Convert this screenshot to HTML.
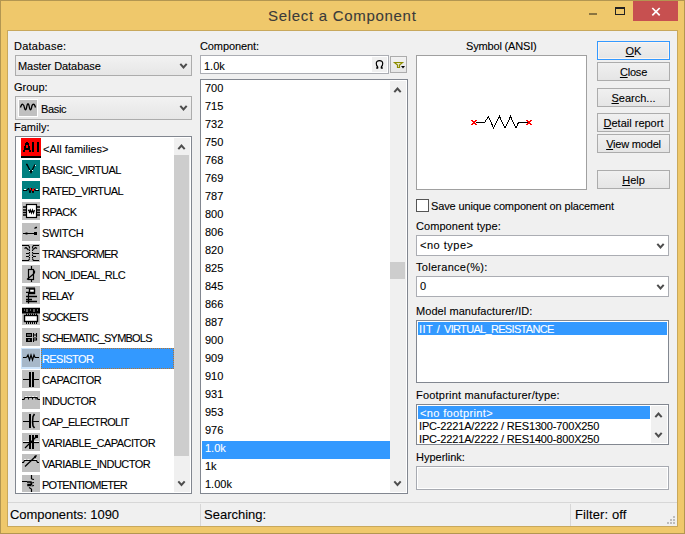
<!DOCTYPE html><html><head><meta charset="utf-8"><style>html,body{margin:0;padding:0;width:685px;height:534px;overflow:hidden;background:#efc86b;}.t{position:absolute;font-family:'Liberation Sans', sans-serif;white-space:pre;-webkit-text-stroke:0.1px currentColor;}</style></head><body><div style="position:absolute;left:0px;top:0px;width:685px;height:534px;box-sizing:border-box;border:1px solid #b39651;background:#efc86b;"></div><div style="position:absolute;left:7px;top:30px;width:669px;height:495px;border:1px solid #c8a85c;background:#f0f0f0;"></div><div class="t" style="left:268px;top:7px;font-size:15px;line-height:17px;letter-spacing:0.7px;color:#3a3a3a;">Select a Component</div><div style="position:absolute;left:589px;top:13px;width:8px;height:2px;background:#8a7440;"></div><div style="position:absolute;left:615px;top:7px;width:10px;height:8px;box-sizing:border-box;border:1px solid #222;border-top-width:2px;"></div><div style="position:absolute;left:633px;top:1px;width:45px;height:20px;background:#c75050;"></div><svg style="position:absolute;left:633px;top:1px" width="45" height="20"><path d="M19.3,7 L26.7,14.4 M26.7,7 L19.3,14.4" stroke="#fff" stroke-width="1.7"/></svg><div class="t" style="left:14px;top:40px;font-size:11px;line-height:13px;letter-spacing:0.25px;color:#000;">Database:</div><div style="position:absolute;left:15px;top:55px;width:175px;height:19px;border:1px solid #acacac;background:linear-gradient(#f2f2f2,#e6e6e6);"></div><div class="t" style="left:18px;top:60px;font-size:11px;line-height:13px;letter-spacing:-0.07px;color:#000;">Master Database</div><svg style="position:absolute;left:0;top:0" width="685" height="534"><path d="M180.3,63.8 L183.5,67.4 L186.7,63.8" fill="none" stroke="#4d4d4d" stroke-width="2"/></svg><div class="t" style="left:14px;top:81px;font-size:11px;line-height:13px;color:#000;">Group:</div><div style="position:absolute;left:15px;top:96px;width:175px;height:22px;border:1px solid #acacac;background:linear-gradient(#f2f2f2,#e6e6e6);"></div><div style="position:absolute;left:18px;top:99px;width:20px;height:18px;background:#fff;"></div><div style="position:absolute;left:19px;top:100px;width:18px;height:16px;background:#c0c0c0;"></div><div class="t" style="left:41px;top:103px;font-size:11px;line-height:13px;letter-spacing:-0.35px;color:#000;">Basic</div><svg style="position:absolute;left:0;top:0" width="685" height="534"><path d="M180.3,105.8 L183.5,109.4 L186.7,105.8" fill="none" stroke="#4d4d4d" stroke-width="2"/></svg><div class="t" style="left:14px;top:121px;font-size:11px;line-height:13px;color:#000;">Family:</div><div style="position:absolute;left:15px;top:136px;width:175px;height:356px;border:1px solid #828790;background:#fff;"></div><div style="position:absolute;left:174px;top:138px;width:16px;height:354px;background:#f0f0f0;"></div><div style="position:absolute;left:174px;top:155px;width:15px;height:301px;background:#cdcdcd;"></div><svg style="position:absolute;left:0;top:0" width="685" height="534"><path d="M178.3,149.2 L181.5,145.6 L184.7,149.2" fill="none" stroke="#4d4d4d" stroke-width="2"/></svg><svg style="position:absolute;left:0;top:0" width="685" height="534"><path d="M178.3,481.3 L181.5,484.9 L184.7,481.3" fill="none" stroke="#4d4d4d" stroke-width="2"/></svg><div class="t" style="left:200px;top:40px;font-size:11px;line-height:13px;letter-spacing:-0.1px;color:#000;">Component:</div><div style="position:absolute;left:200px;top:55px;width:187px;height:17px;border:1px solid #abadb3;background:#fff;"></div><div class="t" style="left:204px;top:60px;font-size:11px;line-height:13px;color:#000;">1.0k</div><div style="position:absolute;left:372px;top:57px;width:15px;height:15px;background:#f0f0f0;"></div><svg style="position:absolute;left:372px;top:57px" width="15" height="15"><path d="M5.6,11 V9.8 Q4.3,8.6 4.3,6.6 Q4.3,3.7 7.5,3.7 Q10.7,3.7 10.7,6.6 Q10.7,8.6 9.4,9.8 V11" fill="none" stroke="#000" stroke-width="1.2"/><path d="M4.2,11 H6.2 M8.8,11 H10.8" stroke="#000" stroke-width="1.4"/></svg><div style="position:absolute;left:390px;top:56px;width:15px;height:15px;border:1px solid #acacac;background:linear-gradient(#f2f2f2,#e6e6e6);"></div><div style="position:absolute;left:200px;top:79px;width:206px;height:413px;border:1px solid #828790;background:#fff;"></div><div style="position:absolute;left:390px;top:81px;width:16px;height:411px;background:#f0f0f0;"></div><div style="position:absolute;left:390px;top:262px;width:15px;height:17px;background:#cdcdcd;"></div><svg style="position:absolute;left:0;top:0" width="685" height="534"><path d="M394.3,92.2 L397.5,88.6 L400.7,92.2" fill="none" stroke="#4d4d4d" stroke-width="2"/></svg><svg style="position:absolute;left:0;top:0" width="685" height="534"><path d="M394.3,481.3 L397.5,484.9 L400.7,481.3" fill="none" stroke="#4d4d4d" stroke-width="2"/></svg><div style="position:absolute;left:202px;top:81px;width:188px;height:411px;overflow:hidden"><div class="t" style="left:3px;top:1px;font-size:11px;line-height:13px;color:#000">700</div><div class="t" style="left:3px;top:19px;font-size:11px;line-height:13px;color:#000">715</div><div class="t" style="left:3px;top:37px;font-size:11px;line-height:13px;color:#000">732</div><div class="t" style="left:3px;top:55px;font-size:11px;line-height:13px;color:#000">750</div><div class="t" style="left:3px;top:73px;font-size:11px;line-height:13px;color:#000">768</div><div class="t" style="left:3px;top:91px;font-size:11px;line-height:13px;color:#000">769</div><div class="t" style="left:3px;top:109px;font-size:11px;line-height:13px;color:#000">787</div><div class="t" style="left:3px;top:127px;font-size:11px;line-height:13px;color:#000">800</div><div class="t" style="left:3px;top:145px;font-size:11px;line-height:13px;color:#000">806</div><div class="t" style="left:3px;top:163px;font-size:11px;line-height:13px;color:#000">820</div><div class="t" style="left:3px;top:181px;font-size:11px;line-height:13px;color:#000">825</div><div class="t" style="left:3px;top:199px;font-size:11px;line-height:13px;color:#000">845</div><div class="t" style="left:3px;top:217px;font-size:11px;line-height:13px;color:#000">866</div><div class="t" style="left:3px;top:235px;font-size:11px;line-height:13px;color:#000">887</div><div class="t" style="left:3px;top:253px;font-size:11px;line-height:13px;color:#000">900</div><div class="t" style="left:3px;top:271px;font-size:11px;line-height:13px;color:#000">909</div><div class="t" style="left:3px;top:289px;font-size:11px;line-height:13px;color:#000">910</div><div class="t" style="left:3px;top:307px;font-size:11px;line-height:13px;color:#000">931</div><div class="t" style="left:3px;top:325px;font-size:11px;line-height:13px;color:#000">953</div><div class="t" style="left:3px;top:343px;font-size:11px;line-height:13px;color:#000">976</div><div style="position:absolute;left:0;top:360px;width:188px;height:18px;background:#3399ff"></div><div class="t" style="left:3px;top:361px;font-size:11px;line-height:13px;color:#fff">1.0k</div><div class="t" style="left:3px;top:379px;font-size:11px;line-height:13px;color:#000">1k</div><div class="t" style="left:3px;top:397px;font-size:11px;line-height:13px;color:#000">1.00k</div></div><div class="t" style="left:466px;top:40px;font-size:11px;line-height:13px;letter-spacing:-0.17px;color:#000;">Symbol (ANSI)</div><div style="position:absolute;left:416px;top:55px;width:169px;height:133px;border:1px solid #a0a0a0;background:#fff;"></div><div style="position:absolute;left:597px;top:41px;width:71px;height:17px;border:1px solid #3399ff;background:linear-gradient(#f0f0f0,#e5e5e5);box-shadow:inset 0 0 0 1px #fdf5ef;"></div><div class="t" style="left:597px;top:45px;width:73px;text-align:center;font-size:11px;line-height:13px;letter-spacing:0px;color:#000"><u>O</u>K</div><div style="position:absolute;left:597px;top:62px;width:71px;height:17px;border:1px solid #acacac;background:linear-gradient(#f0f0f0,#e5e5e5);"></div><div class="t" style="left:597px;top:66px;width:73px;text-align:center;font-size:11px;line-height:13px;letter-spacing:-0.2px;color:#000"><u>C</u>lose</div><div style="position:absolute;left:597px;top:88px;width:71px;height:17px;border:1px solid #acacac;background:linear-gradient(#f0f0f0,#e5e5e5);"></div><div class="t" style="left:597px;top:92px;width:73px;text-align:center;font-size:11px;line-height:13px;letter-spacing:0px;color:#000"><u>S</u>earch...</div><div style="position:absolute;left:597px;top:113px;width:71px;height:17px;border:1px solid #acacac;background:linear-gradient(#f0f0f0,#e5e5e5);"></div><div class="t" style="left:597px;top:117px;width:73px;text-align:center;font-size:11px;line-height:13px;letter-spacing:0px;color:#000"><u>D</u>etail report</div><div style="position:absolute;left:597px;top:134px;width:71px;height:17px;border:1px solid #acacac;background:linear-gradient(#f0f0f0,#e5e5e5);"></div><div class="t" style="left:597px;top:138px;width:73px;text-align:center;font-size:11px;line-height:13px;letter-spacing:-0.2px;color:#000"><u>V</u>iew model</div><div style="position:absolute;left:597px;top:170px;width:71px;height:17px;border:1px solid #acacac;background:linear-gradient(#f0f0f0,#e5e5e5);"></div><div class="t" style="left:597px;top:174px;width:73px;text-align:center;font-size:11px;line-height:13px;letter-spacing:0px;color:#000"><u>H</u>elp</div><div style="position:absolute;left:416px;top:199px;width:11px;height:11px;border:1px solid #555;background:#fff;"></div><div class="t" style="left:431px;top:200px;font-size:11px;line-height:13px;letter-spacing:-0.14px;color:#000;">Save unique component on placement</div><div class="t" style="left:416px;top:220px;font-size:11px;line-height:13px;letter-spacing:0.07px;color:#000;">Component type:</div><div style="position:absolute;left:416px;top:235px;width:251px;height:19px;border:1px solid #abadb3;background:#fff;"></div><div class="t" style="left:420px;top:239px;font-size:11px;line-height:13px;letter-spacing:0.5px;color:#000;">&lt;no type&gt;</div><svg style="position:absolute;left:0;top:0" width="685" height="534"><path d="M657.3,243.8 L660.5,247.4 L663.7,243.8" fill="none" stroke="#4d4d4d" stroke-width="2"/></svg><div class="t" style="left:416px;top:261px;font-size:11px;line-height:13px;letter-spacing:0.28px;color:#000;">Tolerance(%):</div><div style="position:absolute;left:416px;top:276px;width:251px;height:19px;border:1px solid #abadb3;background:#fff;"></div><div class="t" style="left:420px;top:280px;font-size:11px;line-height:13px;color:#000;">0</div><svg style="position:absolute;left:0;top:0" width="685" height="534"><path d="M657.3,284.8 L660.5,288.4 L663.7,284.8" fill="none" stroke="#4d4d4d" stroke-width="2"/></svg><div class="t" style="left:416px;top:305px;font-size:11px;line-height:13px;letter-spacing:0.07px;color:#000;">Model manufacturer/ID:</div><div style="position:absolute;left:416px;top:320px;width:251px;height:61px;border:1px solid #828790;background:#fff;"></div><div style="position:absolute;left:418px;top:322px;width:249px;height:13px;background:#3399ff;"></div><div class="t" style="left:419px;top:323px;font-size:11px;line-height:13px;letter-spacing:0.5px;color:#fff;">IIT / </div><div class="t" style="left:444px;top:323px;font-size:11px;line-height:13px;letter-spacing:-0.68px;color:#fff;">VIRTUAL_RESISTANCE</div><div class="t" style="left:416px;top:389px;font-size:11px;line-height:13px;letter-spacing:0.2px;color:#000;">Footprint manufacturer/type:</div><div style="position:absolute;left:416px;top:404px;width:251px;height:39px;border:1px solid #828790;background:#fff;"></div><div style="position:absolute;left:418px;top:406px;width:233px;height:37px;overflow:hidden"><div style="position:absolute;left:0;top:0;width:232px;height:13px;background:#3399ff"></div><div class="t" style="left:2px;top:1px;font-size:11px;line-height:13px;color:#fff;letter-spacing:0.36px">&lt;no footprint&gt;</div><div class="t" style="left:1px;top:14px;font-size:11px;line-height:13px;color:#000;letter-spacing:-0.16px">IPC-2221A/2222 / RES1300-700X250</div><div class="t" style="left:1px;top:27px;font-size:11px;line-height:13px;color:#000;letter-spacing:-0.16px">IPC-2221A/2222 / RES1400-800X250</div></div><div style="position:absolute;left:651px;top:406px;width:16px;height:37px;background:#f0f0f0;"></div><svg style="position:absolute;left:0;top:0" width="685" height="534"><path d="M655.3,417.2 L658.5,413.6 L661.7,417.2" fill="none" stroke="#4d4d4d" stroke-width="2"/></svg><svg style="position:absolute;left:0;top:0" width="685" height="534"><path d="M655.3,432.8 L658.5,436.4 L661.7,432.8" fill="none" stroke="#4d4d4d" stroke-width="2"/></svg><div class="t" style="left:416px;top:451px;font-size:11px;line-height:13px;color:#000;">Hyperlink:</div><div style="position:absolute;left:416px;top:466px;width:251px;height:22px;border:1px solid #a7aab1;background:#f0f0f0;box-shadow:inset 0 0 0 1px #fff;"></div><div style="position:absolute;left:8px;top:502px;width:669px;height:1px;background:#d7d7d7;"></div><div style="position:absolute;left:200px;top:504px;width:1px;height:22px;background:#d7d7d7;"></div><div style="position:absolute;left:570px;top:504px;width:1px;height:22px;background:#d7d7d7;"></div><div class="t" style="left:10px;top:507px;font-size:13px;line-height:15px;letter-spacing:-0.05px;color:#000;">Components: 1090</div><div class="t" style="left:204px;top:507px;font-size:13px;line-height:15px;color:#000;">Searching:</div><div class="t" style="left:575px;top:507px;font-size:13px;line-height:15px;letter-spacing:0.1px;color:#000;">Filter: off</div><div style="position:absolute;left:17px;top:138px;width:157px;height:354px;overflow:hidden"><div style="position:absolute;left:4px;top:0px;width:20px;height:18px;background:#f00"></div><div style="position:absolute;left:4px;top:18px;width:20px;height:2px;background:#000"></div><svg style="position:absolute;left:4px;top:0px" width="20" height="18"><path d="M5,4h2v1h-2z M4,5h4v3h-4z M3,8h2v2h-2z M7,8h2v2h-2z M3,10h6v2h-6z M2,12h2v2h-2z M8,12h2v2h-2z M11,4h2v10h-2z M16,4h2v10h-2z" fill="#000"/><rect x="5" y="7" width="2" height="2" fill="#f00"/></svg><div class="t" style="left:26px;top:5px;font-size:11px;line-height:13px;letter-spacing:0px;color:#000">&lt;All families&gt;</div><svg style="position:absolute;left:5px;top:22px;overflow:visible" width="18" height="18"><rect width="18" height="18" fill="#008080"/><path d="M4,4.5 H5 L9,12.5 L13,4.5" fill="none" stroke="#000" stroke-width="1.3"/><rect x="7" y="10" width="1" height="1" fill="#fff"/><rect x="10" y="10" width="1" height="1" fill="#fff"/><rect x="13" y="5" width="1" height="1" fill="#fff"/></svg><div class="t" style="left:25px;top:26px;font-size:11px;line-height:13px;letter-spacing:-0.5px;color:#000">BASIC_VIRTUAL</div><svg style="position:absolute;left:5px;top:43px;overflow:visible" width="18" height="18"><rect width="18" height="18" fill="#008080"/><path d="M1,9.5 H5 M13,9.5 H17" stroke="#000" stroke-width="1"/><path d="M2,8.5 H4 M14,8.5 H16" stroke="#fff" stroke-width="1"/><path d="M5,9.5 L6.5,7 L8,12 L9.5,7 L11,12 L12.5,7 L13,9.5" fill="none" stroke="#000" stroke-width="1"/><rect x="8" y="7" width="1" height="2" fill="#f00"/><rect x="10" y="8" width="2" height="2" fill="#f00"/><rect x="12" y="7" width="1" height="1" fill="#f00"/></svg><div class="t" style="left:25px;top:47px;font-size:11px;line-height:13px;letter-spacing:-0.6px;color:#000">RATED_VIRTUAL</div><svg style="position:absolute;left:5px;top:64px;overflow:visible" width="18" height="18"><rect width="18" height="18" fill="#c0c0c0"/><rect x="4.5" y="2.5" width="10" height="13" fill="#fff" stroke="#000" stroke-width="1.2"/><path d="M1,5 H4 M1,8 H4 M1,10.5 H4 M1,13 H4 M15,5 H18 M15,8 H18 M15,10.5 H18 M15,13 H18" stroke="#000" stroke-width="1.3"/><path d="M6,8.5 L7,8 L7.5,11 L8.5,8 L9.5,11 L10.5,8 L11.5,11 L12.5,8" fill="none" stroke="#000" stroke-width="1.1"/></svg><div class="t" style="left:25px;top:68px;font-size:11px;line-height:13px;letter-spacing:-0.5px;color:#000">RPACK</div><svg style="position:absolute;left:5px;top:85px;overflow:visible" width="18" height="18"><rect width="18" height="18" fill="#c0c0c0"/><path d="M1,10.5 H15" stroke="#000" stroke-width="1"/><rect x="3.5" y="9.5" width="2" height="2" fill="#000"/><rect x="12" y="9" width="3" height="3" fill="#000"/><path d="M12.5,5.5 L14,4.5 H15" stroke="#000" stroke-width="1.3" fill="none"/></svg><div class="t" style="left:25px;top:89px;font-size:11px;line-height:13px;letter-spacing:-0.34px;color:#000">SWITCH</div><svg style="position:absolute;left:5px;top:106px;overflow:visible" width="18" height="18"><rect width="18" height="18" fill="#c0c0c0"/><path d="M0,1.5 H6.5 L7.5,3 M17,1.5 H11.5 L10.5,3 M0,16.5 H6.5 L7.5,15 M17,16.5 H11.5 L10.5,15" stroke="#000" stroke-width="1.2" fill="none"/><path d="M7.5,3 V15 M10.5,3 V15" stroke="#000" stroke-width="1.2" stroke-dasharray="1.5,1"/><path d="M2.5,4.5 L4,3.5 L6.5,6 M4,9.5 H7 M4,12.5 H7 M11,5.5 L13.5,3.5 L15,4.5 M11,9.5 H17 M11,12.5 H14" stroke="#000" stroke-width="1.2" fill="none"/><path d="M9,0 V18" stroke="#c8c8c8" stroke-width="1.6"/></svg><div class="t" style="left:25px;top:110px;font-size:11px;line-height:13px;letter-spacing:-0.85px;color:#000">TRANSFORMER</div><svg style="position:absolute;left:5px;top:127px;overflow:visible" width="18" height="18"><rect width="18" height="18" fill="#c0c0c0"/><path d="M9.5,1 V4 M9.5,15 V17" stroke="#000" stroke-width="1.2"/><rect x="6.5" y="4.5" width="5" height="10" fill="none" stroke="#000" stroke-width="1.2"/><path d="M5,14.5 L11.5,9 L12.5,7.5 V5.5" fill="none" stroke="#000" stroke-width="1.2"/></svg><div class="t" style="left:25px;top:131px;font-size:11px;line-height:13px;letter-spacing:-0.56px;color:#000">NON_IDEAL_RLC</div><svg style="position:absolute;left:5px;top:148px;overflow:visible" width="18" height="18"><rect width="18" height="18" fill="#c0c0c0"/><rect x="7.5" y="3" width="5" height="4.5" fill="#fff" stroke="#000" stroke-width="1.4"/><path d="M4,2.2 H13 M4,6.3 H13 M4,10.5 H15 M4,13.5 H10 M4,15.5 H15" stroke="#000" stroke-width="1.3"/><path d="M6.5,7 V17.5" stroke="#000" stroke-width="1.2"/></svg><div class="t" style="left:25px;top:152px;font-size:11px;line-height:13px;letter-spacing:-0.7px;color:#000">RELAY</div><svg style="position:absolute;left:5px;top:169px;overflow:visible" width="18" height="18"><rect width="18" height="18" fill="#c0c0c0"/><path d="M0,1 H18 V6.5 H0 Z" fill="#000"/><path d="M2,3 H3 M5,2 V5 M8,3 H9 M12,2 V5 M15,3 H16" stroke="#c0c0c0" stroke-width="1"/><path d="M4.5,6.5 V8 M6.5,6.5 V8 M8.5,6.5 V8 M10.5,6.5 V8 M12.5,6.5 V8 M14.5,6.5 V8" stroke="#000" stroke-width="1"/><rect x="2.5" y="8.5" width="13" height="6" fill="#fff" stroke="#000" stroke-width="1.4"/><path d="M4.5,15 V17 M6.5,15 V17 M8.5,15 V17 M10.5,15 V17 M12.5,15 V17 M14.5,15 V17" stroke="#000" stroke-width="1"/></svg><div class="t" style="left:25px;top:173px;font-size:11px;line-height:13px;letter-spacing:-1.0px;color:#000">SOCKETS</div><svg style="position:absolute;left:5px;top:190px;overflow:visible" width="18" height="18"><rect width="18" height="18" fill="#c0c0c0"/><path d="M4,5 H10 V9 H4 Z M4,10 H10 V14 H4 Z" fill="#000"/><path d="M5,7 H9 M6,12 H8" stroke="#c0c0c0" stroke-width="1"/><path d="M11.5,5 V9 M14.5,5 V9 M11.5,7 H14.5 M11.5,14 V10 H14.5 V12 H11.5" stroke="#000" stroke-width="1.1" fill="none"/></svg><div class="t" style="left:25px;top:194px;font-size:11px;line-height:13px;letter-spacing:-0.8px;color:#000">SCHEMATIC_SYMBOLS</div><svg style="position:absolute;left:5px;top:211px;overflow:visible" width="18" height="18"><rect x="-1" y="-1" width="20" height="21" fill="#cde4fb"/><rect width="18" height="18" fill="#a7b8c9"/><path d="M1,8.5 H4.5 M13,8.5 H17" stroke="#000" stroke-width="1.2"/><path d="M4.5,8.5 L6,6 L7.5,11 L9,6 L10.5,11 L12,6 L13,8.5" fill="none" stroke="#000" stroke-width="1.2"/></svg><div style="position:absolute;left:24px;top:210px;width:133px;height:21px;background:#3399ff;box-sizing:border-box;border:1px dotted #b8742e"></div><div class="t" style="left:25px;top:215px;font-size:11px;line-height:13px;letter-spacing:-0.58px;color:#fff">RESISTOR</div><svg style="position:absolute;left:5px;top:232px;overflow:visible" width="18" height="18"><rect width="18" height="18" fill="#c0c0c0"/><path d="M1,9.5 H7 M11,9.5 H17" stroke="#000" stroke-width="1.2"/><rect x="7" y="2" width="2" height="15" fill="#000"/><rect x="10" y="2" width="2" height="15" fill="#000"/></svg><div class="t" style="left:25px;top:236px;font-size:11px;line-height:13px;letter-spacing:-0.43px;color:#000">CAPACITOR</div><svg style="position:absolute;left:5px;top:253px;overflow:visible" width="18" height="18"><rect width="18" height="18" fill="#c0c0c0"/><path d="M0,8.5 H2 L3,6.5 H15 L16,8.5 H18" fill="none" stroke="#000" stroke-width="1.2"/><path d="M6.5,6.5 V8.5 M10.5,6.5 V8.5 M14,6.5 V8.5" stroke="#000" stroke-width="1.1"/><path d="M3,5.5 H15" stroke="#fff" stroke-width="0.8" stroke-dasharray="2,1.5"/></svg><div class="t" style="left:25px;top:257px;font-size:11px;line-height:13px;letter-spacing:-0.47px;color:#000">INDUCTOR</div><svg style="position:absolute;left:5px;top:274px;overflow:visible" width="18" height="18"><rect width="18" height="18" fill="#c0c0c0"/><path d="M1,9.5 H7 M11,9.5 H17" stroke="#000" stroke-width="1.2"/><rect x="7" y="2" width="2" height="14" fill="#000"/><path d="M12.5,2 L11,4.5 Q10.2,9.5 11,14 L12.5,16" fill="none" stroke="#000" stroke-width="1.5"/></svg><div class="t" style="left:25px;top:278px;font-size:11px;line-height:13px;letter-spacing:-0.7px;color:#000">CAP_ELECTROLIT</div><svg style="position:absolute;left:5px;top:295px;overflow:visible" width="18" height="18"><rect width="18" height="18" fill="#c0c0c0"/><path d="M1,9.5 H17" stroke="#000" stroke-width="1.2"/><path d="M1,8.5 H7 M11,8.5 H17" stroke="#fff" stroke-width="0.8"/><rect x="7" y="2" width="2" height="14" fill="#000"/><rect x="10" y="2" width="2" height="14" fill="#000"/><path d="M3,15 L14,4" stroke="#000" stroke-width="1.2"/><rect x="13" y="2" width="3" height="3" fill="#000"/></svg><div class="t" style="left:25px;top:299px;font-size:11px;line-height:13px;letter-spacing:-0.51px;color:#000">VARIABLE_CAPACITOR</div><svg style="position:absolute;left:5px;top:316px;overflow:visible" width="18" height="18"><rect width="18" height="18" fill="#c0c0c0"/><path d="M0,8.5 H1.5 L2.5,6.5 H14.5 L15.5,8.5 H17" fill="none" stroke="#000" stroke-width="1.2"/><path d="M2,5.5 H15" stroke="#fff" stroke-width="0.8" stroke-dasharray="2,1.5"/><path d="M3,12.5 L14,2" stroke="#000" stroke-width="1.3"/><path d="M12,2 L15,1 L13.5,4.5 Z" fill="#000"/></svg><div class="t" style="left:25px;top:320px;font-size:11px;line-height:13px;letter-spacing:-0.51px;color:#000">VARIABLE_INDUCTOR</div><svg style="position:absolute;left:5px;top:337px;overflow:visible" width="18" height="18"><rect width="18" height="18" fill="#c0c0c0"/><path d="M9.5,0 V4 M9.5,14 V18 M0,6.5 H5" stroke="#000" stroke-width="1.2"/><path d="M9.5,4 L12,4.5 M12,7.5 L9.5,8 M9.5,11 L12,10.5 M7,12.5 L9.5,14" stroke="#000" stroke-width="1.1"/><path d="M5,7 H9 L9.5,9.5 H6 V10.5 H9" fill="none" stroke="#000" stroke-width="1.5"/></svg><div class="t" style="left:25px;top:341px;font-size:11px;line-height:13px;letter-spacing:-0.75px;color:#000">POTENTIOMETER</div></div><svg style="position:absolute;left:19px;top:100px" width="18" height="16"><path d="M1.5,7.5 Q2.5,3.5 4,4.5 Q5,5 5.5,8 Q6.5,11.5 7.5,8 Q8.2,3.5 9,4 Q9.8,3.5 10.5,8 Q11.5,11.5 12.5,8 Q13,4.5 14,4.5 Q15.5,3.5 16.5,7.5" fill="none" stroke="#000" stroke-width="1.3"/></svg><svg style="position:absolute;left:0;top:0" width="685" height="534" shape-rendering="crispEdges"><path d="M476,122.5 H484.5 L488.5,116.5 L493.5,128 L499.5,116.5 L505,128 L510.5,116.5 L516,128 L518.5,122.5 H529" fill="none" stroke="#000" stroke-width="1"/><path d="M471.5,120 L476.5,125 M476.5,120 L471.5,125 M526.5,120 L531.5,125 M531.5,120 L526.5,125" stroke="#f00" stroke-width="1"/></svg><svg style="position:absolute;left:390px;top:56px" width="17" height="17"><path d="M4.5,6.5 H12.5 L9.5,9 V11.5 H7.5 V9 Z" fill="#e8e8c8" stroke="#8c8c00" stroke-width="1.2"/><path d="M11,10 H15 L13,12.5 Z" fill="#000"/></svg><svg style="position:absolute;left:665px;top:514px" width="12" height="12"><rect x="8" y="2" width="2" height="2" fill="#bdbdbd"/><rect x="5" y="5" width="2" height="2" fill="#bdbdbd"/><rect x="8" y="5" width="2" height="2" fill="#bdbdbd"/><rect x="2" y="8" width="2" height="2" fill="#bdbdbd"/><rect x="5" y="8" width="2" height="2" fill="#bdbdbd"/><rect x="8" y="8" width="2" height="2" fill="#bdbdbd"/></svg></body></html>
